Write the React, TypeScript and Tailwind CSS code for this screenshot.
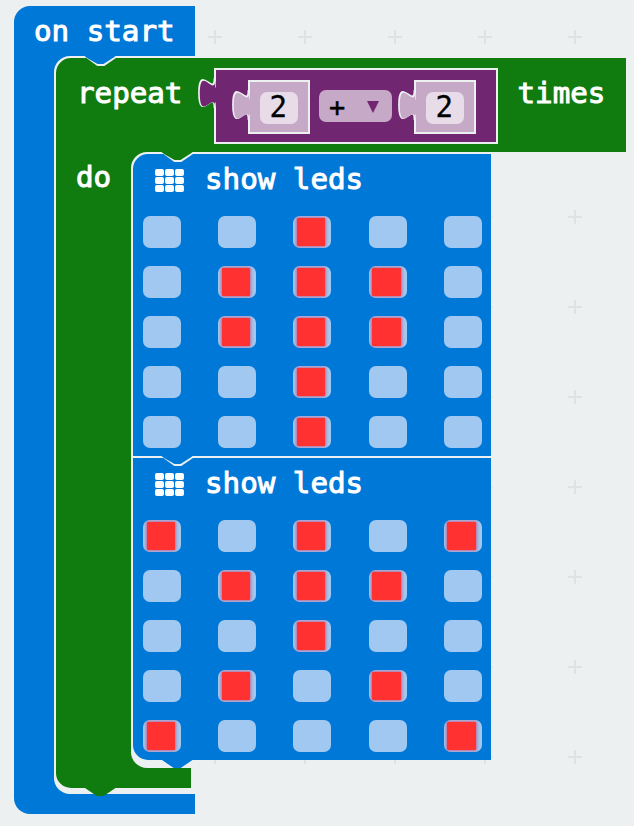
import React from "react";

const BLUE = "#0078d7";
const GREEN = "#107c10";
const PURPLE = "#712672";
const LILAC = "#c6a8c7";
const EDGE = "#ecf0f1";

const HEART = ["..#..", ".###.", ".###.", "..#..", "..#.."];
const CROSS = ["#.#.#", ".###.", "..#..", ".#.#.", "#...#"];

function Label({ children, className = "" }: { children: React.ReactNode; className?: string }) {
  return (
    <span
      className={`block h-10 whitespace-pre font-['DejaVu_Sans_Mono',monospace] text-[29.2px] leading-10 text-white [-webkit-text-stroke:1px_white] ${className}`}
    >
      {children}
    </span>
  );
}

/* Connector under the top edge of a statement, filled with the colour of the block above. */
function TopNotch({ color, className = "left-[30px]" }: { color: string; className?: string }) {
  return (
    <svg className={`absolute top-0 z-10 ${className}`} width="36" height="10" viewBox="0 0 36 10">
      <polygon points="1,1 13.3,10 20.3,10 32,2 32,1" fill={EDGE} />
      <polygon points="0.5,0 3,2 13.5,8 19.5,8 30,1.3 31.5,0" fill={color} />
    </svg>
  );
}

function BottomNotch({ color }: { color: string }) {
  return (
    <svg className="absolute left-[29px] top-full z-10" width="32" height="8" viewBox="0 0 32 8">
      <polygon points="0,0 11.7,8 18.7,8 30.5,0" fill={color} />
    </svg>
  );
}

function Tab({ color }: { color: string }) {
  return (
    <svg className="absolute -left-[19px] top-[7px]" width="22" height="34" viewBox="0 0 22 34">
      <path d="M17.5,1 c0,20 -15.5,-16 -15.5,15 s15.5,-5 15.5,15" fill={EDGE} stroke={EDGE} strokeWidth="1.8" />
      <path d="M18.3,2 c0,20 -15.5,-16 -15.5,14.5 s15.5,-5 15.5,15" fill={color} />
      <rect x="15.5" y="10.5" width="4.5" height="15" fill={color} />
    </svg>
  );
}

function NumberValue() {
  return (
    <div className="relative flex h-[54px] w-[62px] items-start border-2 border-[#ecf0f1] bg-[#c6a8c7] pl-[9.5px] pt-[10px]">
      <Tab color={LILAC} />
      <div className="flex h-8 w-[38px] items-start justify-center rounded-[7px] bg-[#e8dce8] text-black">
        <span className="-mt-[2px] block scale-x-[0.94] font-['DejaVu_Sans_Mono',monospace] text-[31px] leading-8 [-webkit-text-stroke:0.3px_black]">
          2
        </span>
      </div>
    </div>
  );
}

function Leds({ rows, last = false }: { rows: string[]; last?: boolean }) {
  return (
    <div
      className={`relative h-[302px] w-[358.4px] bg-[#0078d7] pl-[10px] ${last ? "rounded-bl-[15px]" : "rounded-tl-[15px]"}`}
    >
      <div className="flex h-[62px] pl-3 pt-[5px]">
        <div className="mt-[10px] grid h-[23px] w-[29px] grid-cols-3 gap-x-[1.3px] gap-y-[1.5px]">
          {Array.from({ length: 9 }, (_, i) => (
            <i key={i} className="rounded-[2px] bg-white" />
          ))}
        </div>
        <Label className="ml-[21px]">show leds</Label>
      </div>
      <div className="grid grid-cols-[repeat(5,38px)] gap-x-[37.2px] gap-y-[18px]">
        {rows.join("").split("").map((c, i) => (
          <div key={i} className="h-8 overflow-hidden rounded-[7px] bg-[#a0c8f0] pl-[3.5px] pt-[1.5px]">
            {c === "#" && (
              <div className="h-[28.5px] w-[28.5px] rounded-[1px] bg-[#ff3131] shadow-[0_0_3px_1px_rgba(220,50,100,0.65)]" />
            )}
          </div>
        ))}
      </div>
      {last && <BottomNotch color={BLUE} />}
    </div>
  );
}

function Sum() {
  return (
    <div className="relative ml-[31px] mt-[10px] flex h-[76px] w-[283.5px] border-2 border-[#ecf0f1] bg-[#712672] pl-8 pt-[10px]">
      <Tab color={PURPLE} />
      <NumberValue />
      <div className="ml-[9px] mt-[10px] flex h-8 w-[73px] items-center rounded-[7px] bg-[#c6a8c7] pl-[10px] text-black">
        <span className="mt-[1px] font-['DejaVu_Sans_Mono',monospace] text-[27px] leading-8 [-webkit-text-stroke:0.4px_black]">+</span>
        <span className="ml-[22px] mt-[2px] h-0 w-0 border-x-[6px] border-t-[12px] border-x-transparent border-t-[#712672]" />
      </div>
      <div className="ml-[22px]">
        <NumberValue />
      </div>
    </div>
  );
}

function Repeat() {
  return (
    <div className="relative w-[570px]">
      <div className="flex h-[94px] rounded-tl-[15px] bg-[#107c10] pl-[21px]">
        <Label className="w-[106px] pt-[15px]">repeat</Label>
        <Sum />
        <Label className="ml-[20px] pt-[15px]">times</Label>
      </div>
      <div className="relative flex h-[636px] w-[135px] rounded-bl-[15px] bg-[#107c10]">
        <Label className="w-[75px] shrink-0 pl-[20px] pt-[5px]">do</Label>
        <div className="relative h-[616px] w-[60px] shrink-0 rounded-l-[16px] bg-[#ecf0f1] pl-[2px] pt-[2px]">
          <TopNotch color={GREEN} />
          <Leds rows={HEART} />
          <div className="relative h-[2px] w-[358.4px] bg-[#ecf0f1]">
            <TopNotch color={BLUE} className="left-[28px]" />
          </div>
          <Leds rows={CROSS} last />
        </div>
        <BottomNotch color={GREEN} />
      </div>
    </div>
  );
}

export default function App() {
  return (
    <main className="relative h-[826px] w-[634px] overflow-hidden bg-[#ecf0f1]">
      <svg className="absolute inset-0" width="634" height="826">
        <defs>
          <pattern id="marks" x="170" y="-8" width="90" height="90" patternUnits="userSpaceOnUse">
            <path d="M38,45h14M45,38v14" stroke="#000" strokeOpacity=".06" strokeWidth="2" />
          </pattern>
        </defs>
        <rect width="634" height="826" fill="url(#marks)" />
      </svg>
      <div className="relative ml-[14px] mt-[6px] flex h-[808px] w-[181px] flex-col rounded-l-[16px] bg-[#0078d7]">
        <Label className="h-[50px] pl-[20px] pt-[5px]">on start</Label>
        <div className="relative ml-10 h-[738px] w-[141px] rounded-l-[16px] bg-[#ecf0f1] pl-[2px] pt-[2px]">
          <TopNotch color={BLUE} />
          <Repeat />
        </div>
      </div>
    </main>
  );
}
